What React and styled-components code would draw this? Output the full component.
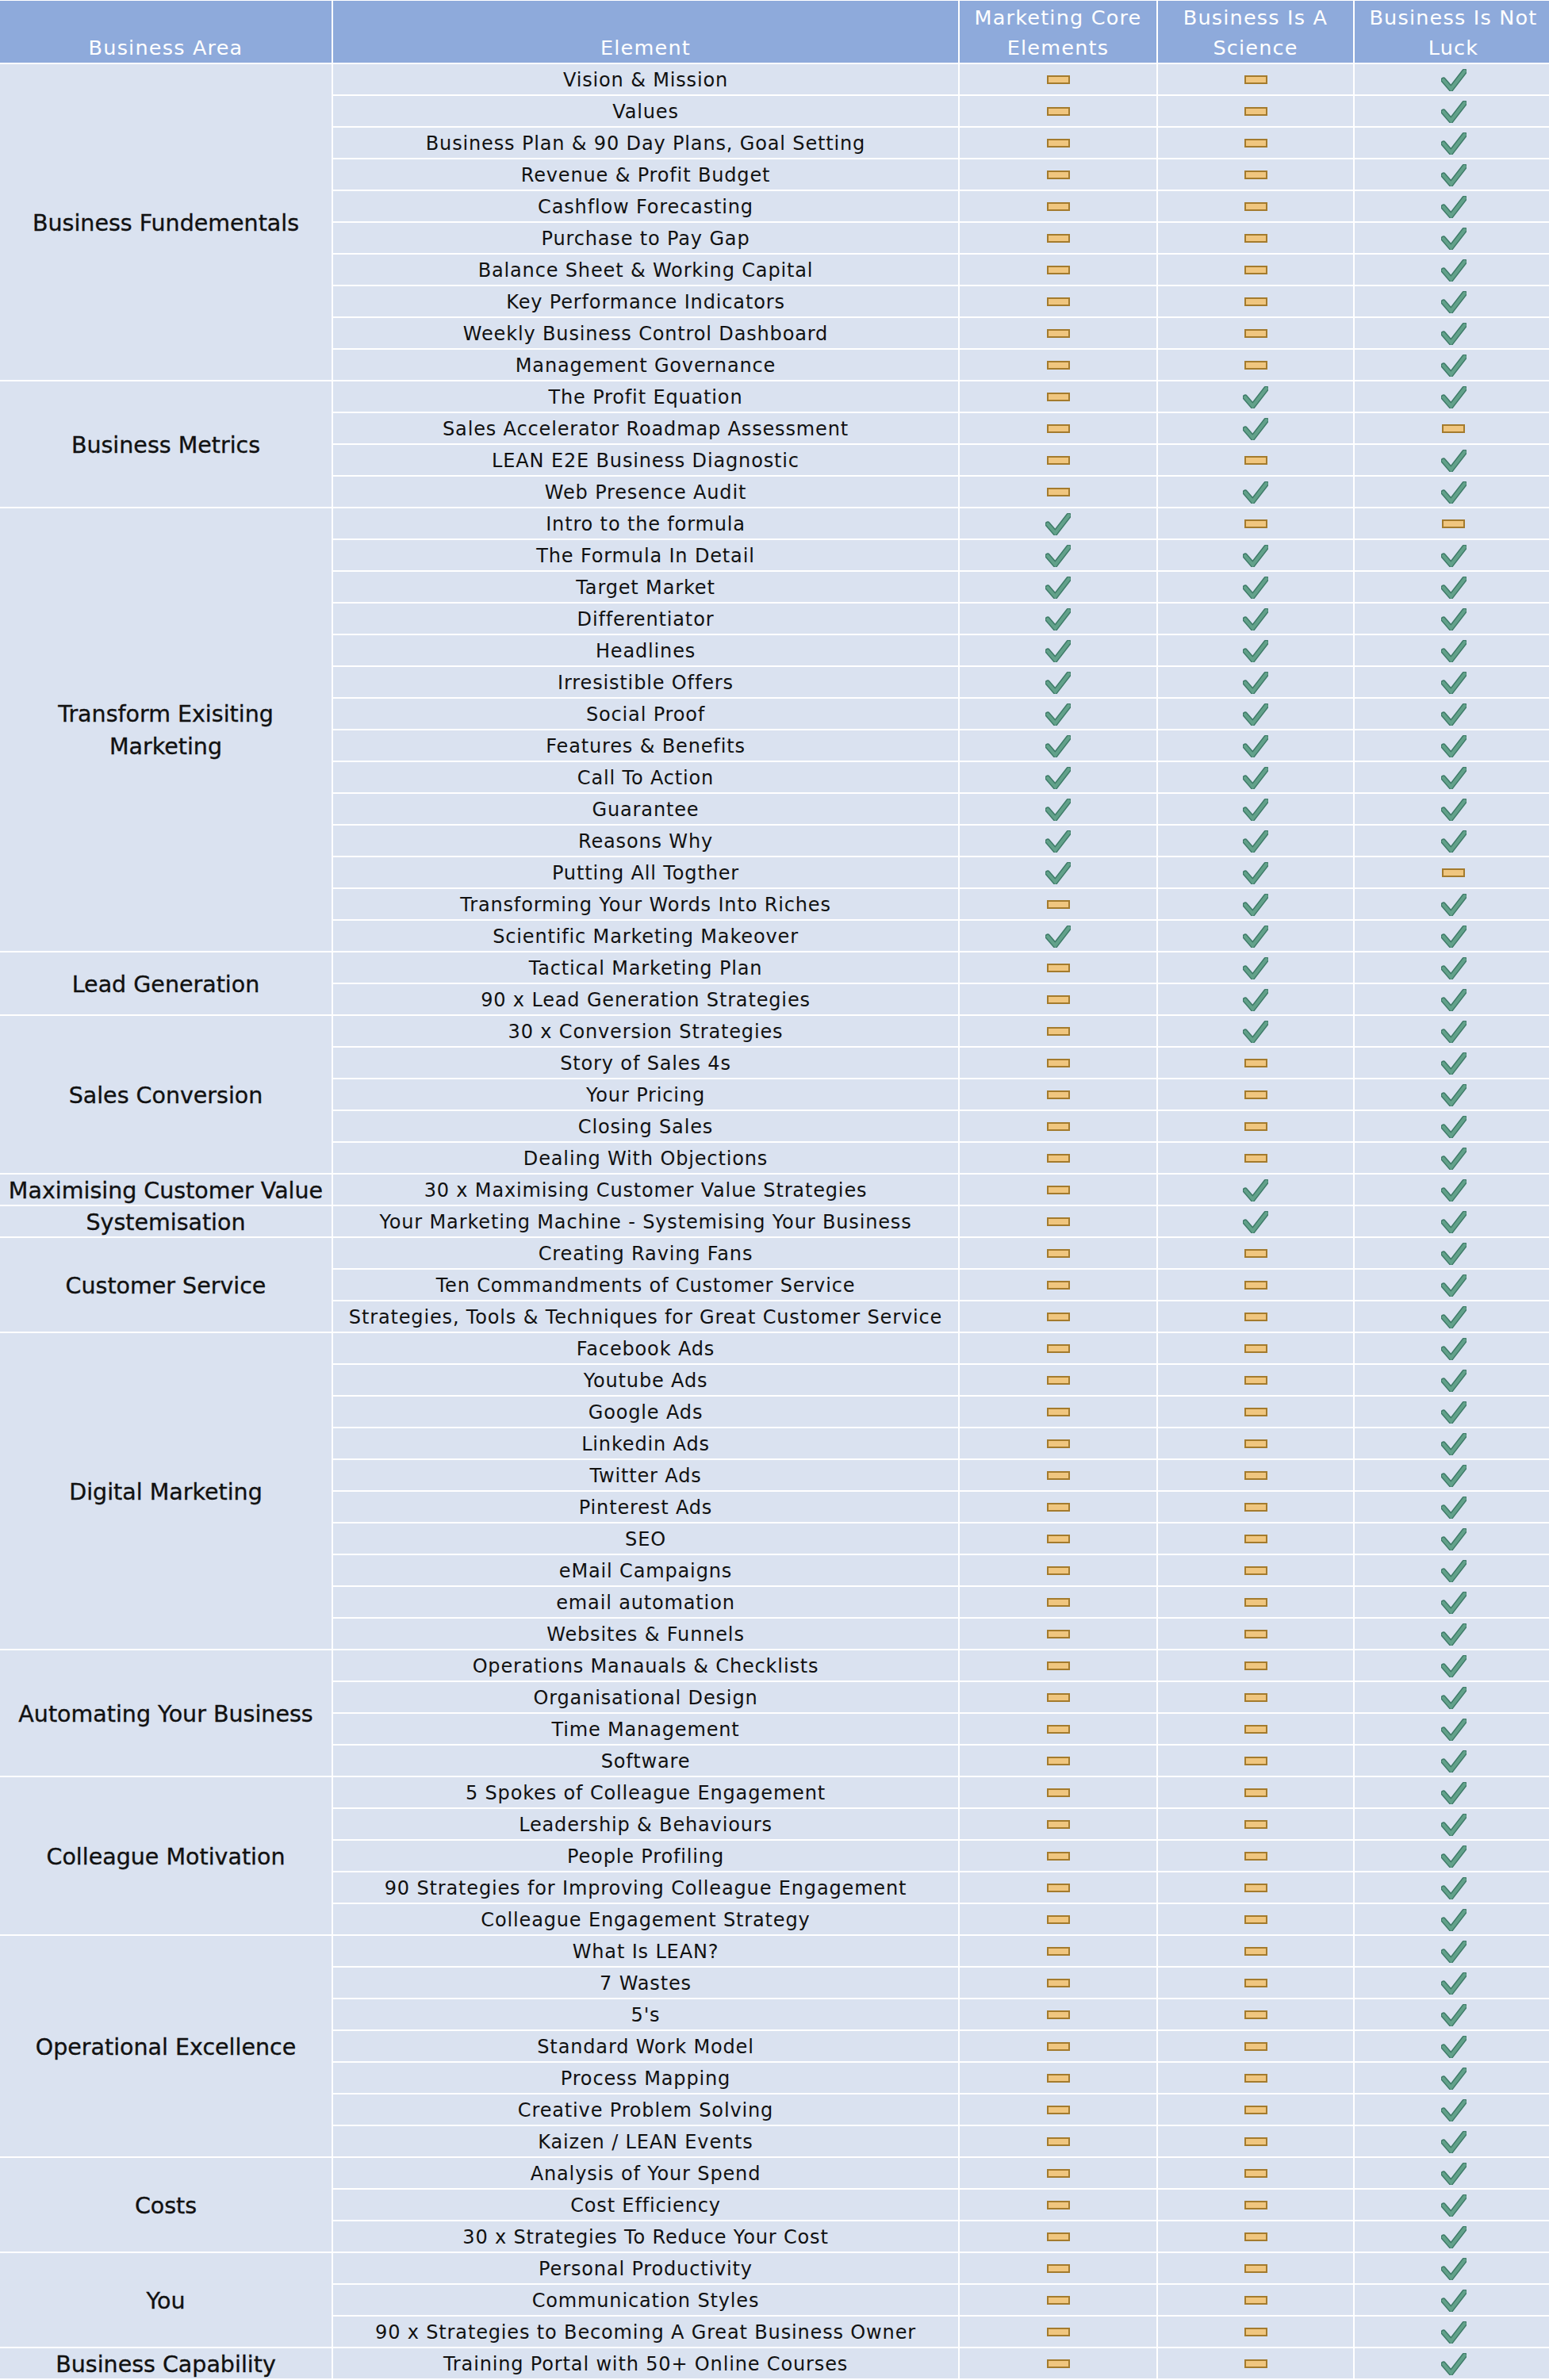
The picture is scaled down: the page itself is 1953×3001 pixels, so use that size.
import React from 'react';
import styled, { createGlobalStyle } from 'styled-components';

const GlobalStyle = createGlobalStyle`
  html, body {
    margin: 0;
    padding: 0;
    background: #ffffff;
  }
  body {
    font-family: 'DejaVu Sans', 'Liberation Sans', sans-serif;
    color: #111111;
  }
`;

// D = dash (not covered), C = check (covered)
const sections = [
  {
    area: 'Business Fundementals',
    rows: [
      ['Vision & Mission', 'DDC'],
      ['Values', 'DDC'],
      ['Business Plan & 90 Day Plans, Goal Setting', 'DDC'],
      ['Revenue & Profit Budget', 'DDC'],
      ['Cashflow Forecasting', 'DDC'],
      ['Purchase to Pay Gap', 'DDC'],
      ['Balance Sheet & Working Capital', 'DDC'],
      ['Key Performance Indicators', 'DDC'],
      ['Weekly Business Control Dashboard', 'DDC'],
      ['Management Governance', 'DDC'],
    ],
  },
  {
    area: 'Business Metrics',
    rows: [
      ['The Profit Equation', 'DCC'],
      ['Sales Accelerator Roadmap Assessment', 'DCD'],
      ['LEAN E2E Business Diagnostic', 'DDC'],
      ['Web Presence Audit', 'DCC'],
    ],
  },
  {
    area: 'Transform Exisiting\nMarketing',
    rows: [
      ['Intro to the formula', 'CDD'],
      ['The Formula In Detail', 'CCC'],
      ['Target Market', 'CCC'],
      ['Differentiator', 'CCC'],
      ['Headlines', 'CCC'],
      ['Irresistible Offers', 'CCC'],
      ['Social Proof', 'CCC'],
      ['Features & Benefits', 'CCC'],
      ['Call To Action', 'CCC'],
      ['Guarantee', 'CCC'],
      ['Reasons Why', 'CCC'],
      ['Putting All Togther', 'CCD'],
      ['Transforming Your Words Into Riches', 'DCC'],
      ['Scientific Marketing Makeover', 'CCC'],
    ],
  },
  {
    area: 'Lead Generation',
    rows: [
      ['Tactical Marketing Plan', 'DCC'],
      ['90 x Lead Generation Strategies', 'DCC'],
    ],
  },
  {
    area: 'Sales Conversion',
    rows: [
      ['30 x Conversion Strategies', 'DCC'],
      ['Story of Sales 4s', 'DDC'],
      ['Your Pricing', 'DDC'],
      ['Closing Sales', 'DDC'],
      ['Dealing With Objections', 'DDC'],
    ],
  },
  {
    area: 'Maximising Customer Value',
    rows: [['30 x Maximising Customer Value Strategies', 'DCC']],
  },
  {
    area: 'Systemisation',
    rows: [['Your Marketing Machine - Systemising Your Business', 'DCC']],
  },
  {
    area: 'Customer Service',
    rows: [
      ['Creating Raving Fans', 'DDC'],
      ['Ten Commandments of Customer Service', 'DDC'],
      ['Strategies, Tools & Techniques for Great Customer Service', 'DDC'],
    ],
  },
  {
    area: 'Digital Marketing',
    rows: [
      ['Facebook Ads', 'DDC'],
      ['Youtube Ads', 'DDC'],
      ['Google Ads', 'DDC'],
      ['Linkedin Ads', 'DDC'],
      ['Twitter Ads', 'DDC'],
      ['Pinterest Ads', 'DDC'],
      ['SEO', 'DDC'],
      ['eMail Campaigns', 'DDC'],
      ['email automation', 'DDC'],
      ['Websites & Funnels', 'DDC'],
    ],
  },
  {
    area: 'Automating Your Business',
    rows: [
      ['Operations Manauals & Checklists', 'DDC'],
      ['Organisational Design', 'DDC'],
      ['Time Management', 'DDC'],
      ['Software', 'DDC'],
    ],
  },
  {
    area: 'Colleague Motivation',
    rows: [
      ['5 Spokes of Colleague Engagement', 'DDC'],
      ['Leadership & Behaviours', 'DDC'],
      ['People Profiling', 'DDC'],
      ['90 Strategies for Improving Colleague Engagement', 'DDC'],
      ['Colleague Engagement Strategy', 'DDC'],
    ],
  },
  {
    area: 'Operational Excellence',
    rows: [
      ['What Is LEAN?', 'DDC'],
      ['7 Wastes', 'DDC'],
      ["5's", 'DDC'],
      ['Standard Work Model', 'DDC'],
      ['Process Mapping', 'DDC'],
      ['Creative Problem Solving', 'DDC'],
      ['Kaizen / LEAN Events', 'DDC'],
    ],
  },
  {
    area: 'Costs',
    rows: [
      ['Analysis of Your Spend', 'DDC'],
      ['Cost Efficiency', 'DDC'],
      ['30 x Strategies To Reduce Your Cost', 'DDC'],
    ],
  },
  {
    area: 'You',
    rows: [
      ['Personal Productivity', 'DDC'],
      ['Communication Styles', 'DDC'],
      ['90 x Strategies to Becoming A Great Business Owner', 'DDC'],
    ],
  },
  {
    area: 'Business Capability',
    rows: [['Training Portal with 50+ Online Courses', 'DDC']],
  },
];

const Grid = styled.div`
  display: grid;
  grid-template-columns: 418px 788px 248px 246px 249px;
  grid-template-rows: 78px;
  grid-auto-rows: 38px;
  gap: 2px;
  width: 1953px;
  box-sizing: border-box;
  padding: 1px 0 1px 0;
  background: #ffffff;
`;

const HeadCell = styled.div`
  display: flex;
  flex-direction: column;
  justify-content: flex-end;
  align-items: center;
  padding-bottom: 0;
  background: #8eaadb;
  color: #ffffff;
  font-size: 25.5px;
  letter-spacing: 1.2px;
  line-height: 38px;
  text-align: center;
  white-space: nowrap;
`;

const AreaCell = styled.div`
  grid-column: 1;
  grid-row: span ${(p) => p.$span};
  display: flex;
  align-items: center;
  justify-content: center;
  padding: 2px 4px 0;
  background: #dae2f0;
  font-size: 28.5px;
  line-height: 41px;
  text-align: center;
  white-space: pre-line;
  -webkit-text-stroke: 0.35px #111111;
`;

const ElementCell = styled.div`
  display: flex;
  align-items: center;
  justify-content: center;
  padding-top: 2px;
  background: #dae2f0;
  font-size: 24px;
  letter-spacing: 0.85px;
  white-space: nowrap;
`;

const MarkCell = styled.div`
  display: flex;
  align-items: center;
  justify-content: center;
  background: #dae2f0;
`;

const Dash = styled.span`
  display: block;
  width: 29px;
  height: 11px;
  box-sizing: border-box;
  background: #f0c67f;
  border: 2.5px solid #a47b2d;
  margin-top: 1px;
`;

const CheckSvg = styled.svg`
  display: block;
  width: 32px;
  height: 28px;
  margin-top: 2px;
`;

const Check = () => (
  <CheckSvg viewBox="0 0 32 28">
    <path
      d="M3 14 L12.5 25 L29.5 3"
      fill="none"
      stroke="#3d7a67"
      strokeWidth="7"
      strokeLinecap="round"
      strokeLinejoin="miter"
    />
    <path
      d="M3 14 L12.5 25 L29.5 3"
      fill="none"
      stroke="#62a18a"
      strokeWidth="4.2"
      strokeLinecap="round"
      strokeLinejoin="miter"
    />
  </CheckSvg>
);

const Mark = ({ type }) => (
  <MarkCell>{type === 'C' ? <Check /> : <Dash />}</MarkCell>
);

const App = () => (
  <>
    <GlobalStyle />
    <Grid>
      <HeadCell>Business Area</HeadCell>
      <HeadCell>Element</HeadCell>
      <HeadCell>
        <span>Marketing Core</span>
        <span>Elements</span>
      </HeadCell>
      <HeadCell>
        <span>Business Is A</span>
        <span>Science</span>
      </HeadCell>
      <HeadCell>
        <span>Business Is Not</span>
        <span>Luck</span>
      </HeadCell>
      {sections.map((section) =>
        section.rows.map(([element, marks], i) => (
          <React.Fragment key={section.area + element}>
            {i === 0 && (
              <AreaCell $span={section.rows.length}>{section.area}</AreaCell>
            )}
            <ElementCell>{element}</ElementCell>
            {marks.split('').map((m, j) => (
              <Mark key={j} type={m} />
            ))}
          </React.Fragment>
        ))
      )}
    </Grid>
  </>
);

export default App;
